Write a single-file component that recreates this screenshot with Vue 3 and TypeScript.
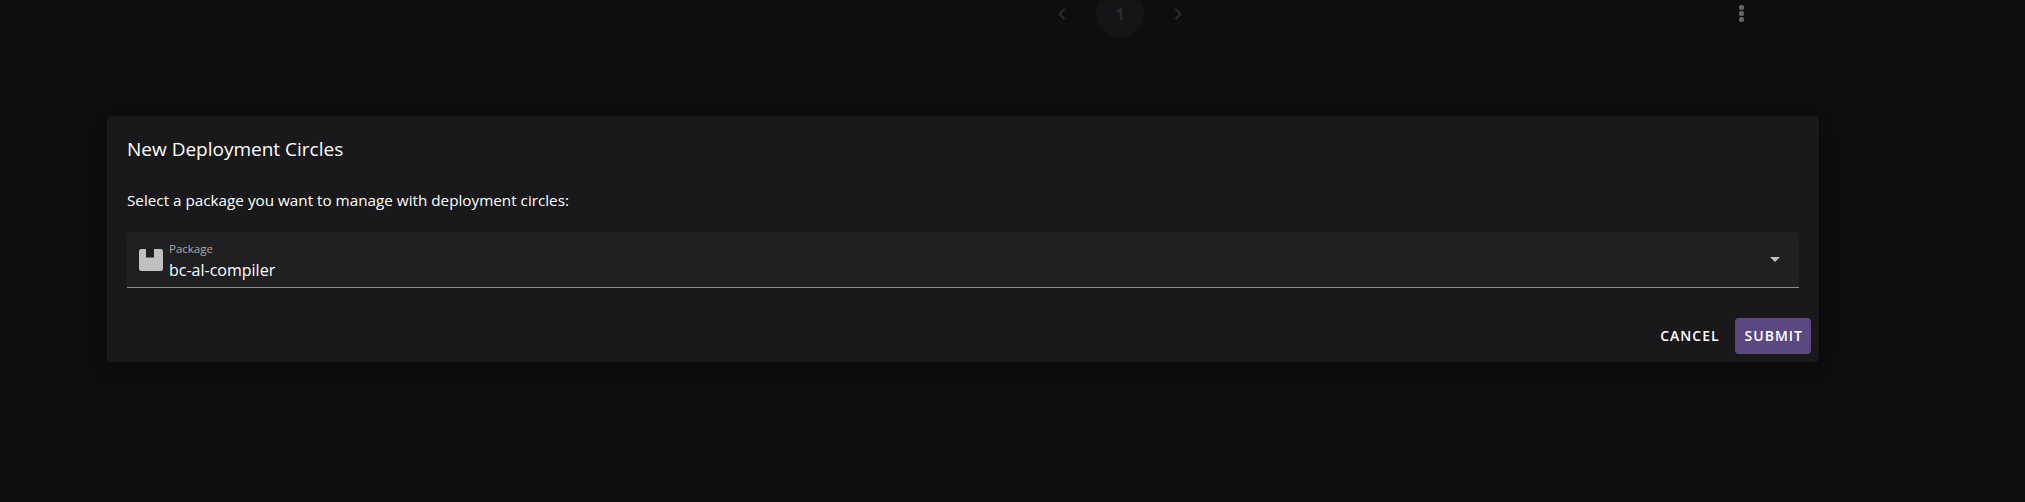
<script setup lang="ts">
const title = 'New Deployment Circles'
const prompt = 'Select a package you want to manage with deployment circles:'
</script>

<template>
  <div class="page">
    <div class="topbar">
      <div class="pager">
        <svg class="chev" viewBox="0 0 24 24"><path d="M15.41 7.41 14 6l-6 6 6 6 1.41-1.41L10.83 12z" /></svg>
        <span class="num">1</span>
        <svg class="chev" viewBox="0 0 24 24"><path d="M10 6 8.59 7.41 13.17 12l-4.58 4.59L10 18l6-6z" /></svg>
      </div>
      <div class="dots"><i></i><i></i><i></i></div>
    </div>
    <section class="dialog">
      <h2 class="title">{{ title }}</h2>
      <p class="prompt">{{ prompt }}</p>
      <div class="field">
        <svg class="pkg" viewBox="0 0 24 24"><path d="M2.500 1H7v8.500h8V1h6.500A2.500 2.500 0 0 1 24 3.500v17a2.500 2.500 0 0 1-2.500 2.500h-19A2.500 2.500 0 0 1 0 20.500v-17A2.500 2.500 0 0 1 2.500 1z" /></svg>
        <div class="value">
          <span class="label">Package</span>
          <span class="text">bc-al-compiler</span>
        </div>
        <span class="caret"></span>
      </div>
      <div class="actions">
        <button class="btn">CANCEL</button>
        <button class="btn primary">SUBMIT</button>
      </div>
    </section>
  </div>
</template>

<style>
html, body { margin: 0; background: #0e0e10; }
</style>

<style scoped>
.page {
  width: 2025px;
  height: 502px;
  overflow: hidden;
  background: #0e0e10;
  font-family: "Open Sans", "Noto Sans", sans-serif;
  color: #fff;
  box-sizing: border-box;
}
.topbar {
  height: 28px;
  display: flex;
  align-items: center;
}
.pager {
  display: flex;
  align-items: center;
  margin-left: 1050px;
}
.chev { width: 24px; height: 24px; fill: #2b2b2d; }
.num {
  width: 48px;
  height: 48px;
  margin: 0 22px;
  border-radius: 50%;
  background: #141416;
  color: #2b2b2d;
  font-size: 16px;
  font-weight: 700;
  display: flex;
  align-items: center;
  justify-content: center;
}
.dots {
  margin-left: 549px;
  margin-top: -2px;
  display: flex;
  flex-direction: column;
  gap: 1px;
}
.dots i { width: 5px; height: 5px; background: #666668; border-radius: 2px; display: block; }
.dialog {
  margin: 88px 206px 0 107px;
  height: 246px;
  box-sizing: border-box;
  padding: 19px 20px 8px;
  background: #19191b;
  border-radius: 4px;
  box-shadow: 0 8px 20px rgba(0,0,0,.25);
  display: flex;
  flex-direction: column;
}
.title {
  margin: 0;
  font-size: 19px;
  font-weight: 400;
  line-height: 28px;
  color: #fff;
}
.prompt {
  margin: 27px 0 0;
  font-size: 15.25px;
  line-height: 20px;
  color: #fff;
}
.field {
  margin-top: 22px;
  height: 56px;
  box-sizing: border-box;
  background: #202022;
  border-radius: 4px 4px 0 0;
  border-bottom: 1px solid #8d8d8e;
  display: flex;
  align-items: center;
  padding: 0 19px 0 12px;
}
.pkg { width: 24px; height: 24px; fill: #c0c0c0; flex: none; }
.value {
  display: flex;
  flex-direction: column;
  margin-left: 6px;
  padding-top: 3px;
  flex: 1;
}
.label { font-size: 11.5px; line-height: 17px; color: #a9a9aa; }
.text { font-size: 16px; line-height: 25px; color: #fff; padding-top: 1px; margin-bottom: -1px; }
.caret {
  width: 0;
  height: 0;
  border-left: 5px solid transparent;
  border-right: 5px solid transparent;
  border-top: 5px solid #c0c0c0;
}
.actions {
  margin-top: auto;
  display: flex;
  justify-content: flex-end;
  align-items: center;
  gap: 8px;
  margin-right: -12px;
}
.btn {
  height: 36px;
  padding: 0 7px 2px 9px;
  font-family: inherit;
  font-size: 14px;
  font-weight: 600;
  letter-spacing: 1px;
  border: 0;
  border-radius: 4px;
  background: transparent;
  color: #fff;
}
.primary { background: #5c4880; padding: 0 8px 2px 10px; }
</style>
